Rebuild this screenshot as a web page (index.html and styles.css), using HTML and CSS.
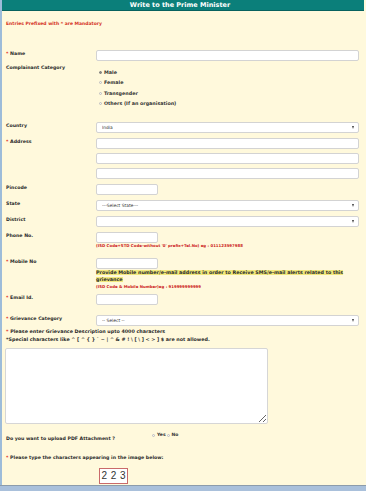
FILE: index.html
```html
<!DOCTYPE html>
<html lang="en">
  <head>
    <meta charset="UTF-8" />
    <meta name="viewport" content="width=device-width, initial-scale=1.0" />
    <title>Write to the Prime Minister</title>
    <link rel="stylesheet" href="styles.css">
  </head>
  <body>
    <header class="title-bar">Write to the Prime Minister</header>

    <form class="pm-form" onsubmit="event.preventDefault();">
      <p class="mandatory">Entries Prefixed with * are Mandatory</p>

      <div class="row row-name">
        <label class="label" for="name"><span class="req">*</span> Name</label>
        <div class="field"><input type="text" id="name" class="input wide" /></div>
      </div>

      <div class="row row-category">
        <span class="label">Complainant Category</span>
        <div class="field radios">
          <label class="radio"><input type="radio" name="cat" checked /> Male</label>
          <label class="radio"><input type="radio" name="cat" /> Female</label>
          <label class="radio"><input type="radio" name="cat" /> Transgender</label>
          <label class="radio"><input type="radio" name="cat" /> Others (If an organisation)</label>
        </div>
      </div>

      <div class="row row-country">
        <label class="label" for="country">Country</label>
        <div class="field">
          <span class="select-wrap wide">
            <select id="country" class="select"><option>India</option></select>
          </span>
        </div>
      </div>

      <div class="row">
        <label class="label" for="addr1"><span class="req">*</span> Address</label>
        <div class="field stack">
          <input type="text" id="addr1" class="input wide" />
          <input type="text" class="input wide" />
          <input type="text" class="input wide" />
        </div>
      </div>

      <div class="row">
        <label class="label" for="pincode">Pincode</label>
        <div class="field"><input type="text" id="pincode" class="input small" /></div>
      </div>

      <div class="row">
        <label class="label" for="state">State</label>
        <div class="field">
          <span class="select-wrap wide">
            <select id="state" class="select"><option>---Select State---</option></select>
          </span>
        </div>
      </div>

      <div class="row">
        <label class="label" for="district">District</label>
        <div class="field">
          <span class="select-wrap wide">
            <select id="district" class="select"><option></option></select>
          </span>
        </div>
      </div>

      <div class="row">
        <label class="label" for="phone">Phone No.</label>
        <div class="field">
          <input type="text" id="phone" class="input small" />
          <div class="hint">(ISD Code+STD Code-without '0' prefix+Tel.No) eg : 011123597988</div>
        </div>
      </div>

      <div class="row row-mobile">
        <label class="label" for="mobile"><span class="req">*</span> Mobile No</label>
        <div class="field">
          <input type="text" id="mobile" class="input small" />
          <div class="notice"><span>Provide Mobile number/e-mail address in order to Receive SMS/e-mail alerts related to this grievance</span></div>
          <div class="hint hint-mobile">(ISD Code &amp; Mobile Number)eg : 919999999999</div>
        </div>
      </div>

      <div class="row row-email">
        <label class="label" for="email"><span class="req">*</span> Email Id.</label>
        <div class="field"><input type="text" id="email" class="input small" /></div>
      </div>

      <div class="row row-grievance">
        <label class="label" for="gcat"><span class="req">*</span> Grievance Category</label>
        <div class="field">
          <span class="select-wrap wide">
            <select id="gcat" class="select"><option>-- Select --</option></select>
          </span>
        </div>
      </div>

      <p class="desc-note"><span class="req">*</span> Please enter Grievance Description upto 4000 characters<br />*Special characters like ^ [ ^ { } ` ~ | ^ &amp; # ! \ [ \ ] &lt; &gt; ] $ are not allowed.</p>

      <textarea class="description" aria-label="Grievance Description"></textarea>

      <div class="pdf-row">
        <span class="pdf-label">Do you want to upload PDF Attachment ?</span>
        <span class="pdf-options">
          <label class="radio-inline"><input type="radio" name="pdf" />Yes</label>
          <label class="radio-inline"><input type="radio" name="pdf" />No</label>
        </span>
      </div>

      <p class="captcha-note"><span class="req">*</span> Please type the characters appearing in the image below:</p>
      <div class="captcha">2 2 3</div>
      <p class="captcha-help">Enter the characters shown above</p>
    </form>

    <div class="taskbar"></div>
  </body>
</html>
```

FILE: styles.css
```css
body {
  margin: 0;
  min-height: 491px;
  box-sizing: border-box;
  background-color: #fff9dc;
  border-left: 2px solid #9dbcd9;
  font-family: "DejaVu Sans", Verdana, sans-serif;
  color: #2b2b2b;
  overflow: hidden;
}
.title-bar {
  height: 10px;
  line-height: 10px;
  margin-right: 2px;
  padding-right: 6px;
  background-color: #0b7f7a;
  border-bottom: 1px solid #08625e;
  color: #fff;
  font-size: 6.5px;
  font-weight: bold;
  text-align: center;
}
.pm-form {
  margin: 0;
}
.mandatory {
  margin: 10px 0 0 4px;
  line-height: 6px;
  font-size: 4.5px;
  font-weight: bold;
  color: #d5331f;
}
.req {
  color: #e2352b;
}
.row {
  display: flex;
  align-items: flex-start;
  margin-top: 5px;
}
.row-name {
  margin-top: 23px;
}
.row-category {
  margin-top: 3px;
}
.row-country {
  margin-top: 13px;
}
.row-mobile {
  margin-top: 10px;
}
.row-email {
  margin-top: 4px;
}
.row-grievance {
  margin-top: 10px;
}
.label {
  flex: 0 0 90px;
  padding: 1px 0 0 4px;
  line-height: 6px;
  font-size: 4.7px;
  font-weight: bold;
  color: #2b2b2b;
}
.field {
  flex: 1;
}
.stack {
  display: flex;
  flex-direction: column;
  gap: 4px;
}
.input {
  display: block;
  box-sizing: border-box;
  height: 11px;
  margin: 0;
  padding: 0 4px;
  background-color: #fff;
  border: 1px solid #d3d3d3;
  border-radius: 2px;
  font-size: 4.4px;
}
.wide {
  width: 263px;
}
.small {
  width: 62px;
}
.select-wrap {
  display: block;
  position: relative;
  height: 11px;
}
.select-wrap::after {
  content: "";
  position: absolute;
  right: 5px;
  top: 4px;
  border-left: 1.6px solid transparent;
  border-right: 1.6px solid transparent;
  border-top: 3px solid #444;
}
.select {
  display: block;
  width: 100%;
  height: 11px;
  margin: 0;
  padding: 0 5px;
  box-sizing: border-box;
  appearance: none;
  background-color: #fff;
  border: 1px solid #d3d3d3;
  border-radius: 2px;
  font-family: "DejaVu Sans", Verdana, sans-serif;
  font-size: 4.4px;
  color: #333;
}
.radios {
  padding-top: 3px;
}
.radio {
  display: flex;
  align-items: center;
  gap: 2px;
  height: 10.5px;
  padding-left: 3px;
  font-size: 4.8px;
  font-weight: bold;
  color: #333;
}
.radio input,
.radio-inline input {
  appearance: none;
  width: 3px;
  height: 3px;
  margin: 0;
  border: 0.6px solid #bdbdbd;
  border-radius: 50%;
  background-color: #f4f4f4;
}
.radio input:checked {
  background-color: #8a8a8a;
  border-color: #777;
}
.hint {
  line-height: 5px;
  font-size: 3.9px;
  font-weight: bold;
  color: #cc1a1a;
}
.hint-mobile {
  margin-top: 1px;
  line-height: 6px;
}
.notice {
  width: 262px;
  line-height: 7px;
  font-size: 4.8px;
  font-weight: bold;
  color: #2b2b2b;
}
.notice span {
  background-color: #f1e87c;
}
.desc-note {
  margin: 2px 0 0 4px;
  line-height: 8px;
  font-size: 4.8px;
  font-weight: bold;
  color: #2b2b2b;
}
.description {
  display: block;
  box-sizing: border-box;
  width: 263px;
  height: 76px;
  margin: 4px 0 0 3px;
  background-color: #fff;
  border: 1px solid #d6d6d6;
  border-radius: 2px;
}
.pdf-row {
  display: flex;
  align-items: flex-start;
  margin-top: 8px;
}
.pdf-label {
  flex: 0 0 150px;
  padding: 4px 0 0 4px;
  box-sizing: border-box;
  line-height: 6px;
  font-size: 4.7px;
  font-weight: bold;
}
.pdf-options {
  display: flex;
  gap: 1px;
  line-height: 6px;
  font-size: 4.5px;
  font-weight: bold;
  color: #333;
}
.radio-inline {
  display: flex;
  align-items: center;
  gap: 2px;
}
.captcha-note {
  margin: 13px 0 0 4px;
  line-height: 6px;
  font-size: 4.7px;
  font-weight: bold;
}
.captcha {
  box-sizing: border-box;
  width: 29px;
  height: 16px;
  margin: 7px 0 0 97px;
  background-color: #fff;
  border: 1px solid #c96a6a;
  font-family: "Liberation Sans", Arial, sans-serif;
  font-size: 10px;
  line-height: 14px;
  word-spacing: 1px;
  text-align: center;
  color: #333;
}
.captcha-help {
  margin: 1px 0 0 96px;
  line-height: 6px;
  font-size: 4.4px;
  font-weight: bold;
}
.taskbar {
  position: fixed;
  left: 0;
  right: 0;
  bottom: 0;
  height: 5px;
  background-color: #a9c0db;
  border-top: 1px solid #8c9cab;
}
```
